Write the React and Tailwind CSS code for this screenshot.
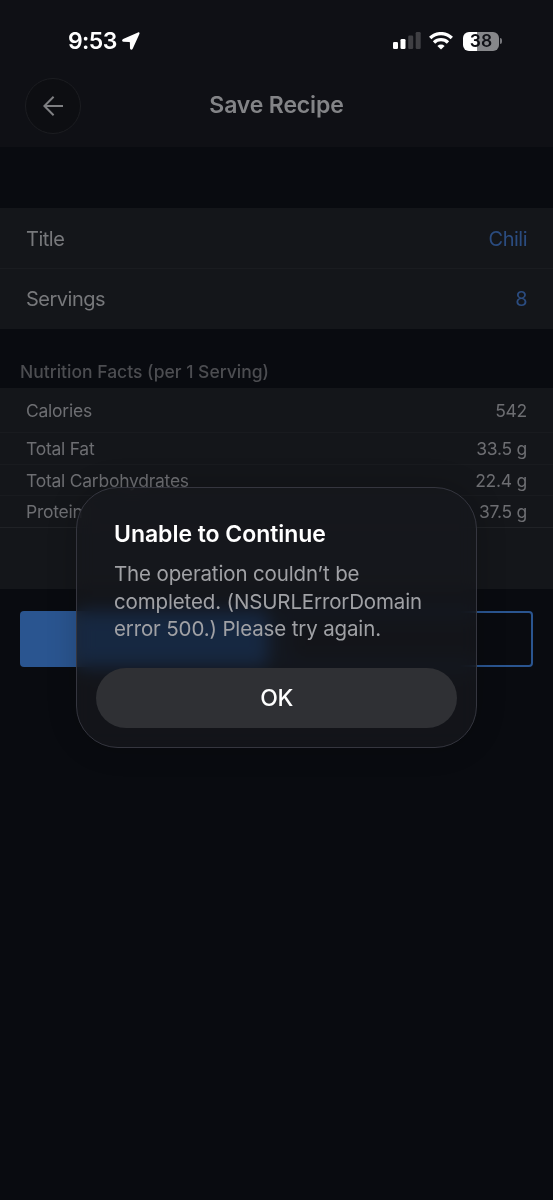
const facts = [
  { label: 'Calories', value: '542', row: 'h-[45px]' },
  { label: 'Total Fat', value: '33.5 g', row: 'h-[32px]' },
  { label: 'Total Carbohydrates', value: '22.4 g', row: 'h-[31px]' },
  { label: 'Protein', value: '37.5 g', row: 'h-[32px]' },
];

function StatusBar() {
  return (
    <div className="flex h-[62px] items-center justify-between pt-5 pr-[51px] pl-[68px] text-white">
      <div className="flex items-center gap-[5px]">
        <span className="text-[23px] leading-6 font-semibold tracking-[-0.6px]">9:53</span>
        <svg width="18" height="18" viewBox="0 0 18 18" fill="currentColor">
          <path d="M16 .5 1.1 7C-.3 7.7-.2 9.6 1.3 9.7l5.9.2c.5 0 .7.2.7.7l.1 5.7c.1 1.7 2 1.9 2.7.4L17.4 2C17.9.9 17-.1 16 .5Z" />
        </svg>
      </div>
      <div className="flex items-center">
        <svg width="28" height="18" viewBox="0 0 28 18" fill="currentColor">
          <rect x="0" y="10" width="5" height="7" rx="1.3" />
          <rect x="7.5" y="7" width="5" height="10" rx="1.3" />
          <rect x="15.2" y="3.5" width="5" height="13.5" rx="1.3" opacity=".2" />
          <rect x="22.7" y="0" width="5" height="17" rx="1.3" opacity=".2" />
        </svg>
        <svg className="mr-px ml-[8px]" width="24" height="18" viewBox="0 0 24 18" fill="none" stroke="currentColor" strokeWidth="3.3">
          <path d="M1.2 6A15.4 15.4 0 0 1 22.8 6" />
          <path d="M5 10.5A10 10 0 0 1 19 10.5" />
          <path d="M8.4 13.9A5.3 5.3 0 0 1 15.6 13.9L12 17.6Z" fill="currentColor" stroke="none" />
        </svg>
        <div className="ml-[9px] flex h-[19px] w-9 items-center justify-center rounded-[6px] bg-linear-to-r from-white from-38% to-[#86878a] to-38% text-[17.5px] font-semibold text-[#0f1015]">
          38
        </div>
        <div className="ml-px h-[6px] w-[2px] rounded-r-full bg-[#76777b]" />
      </div>
    </div>
  );
}

function Header() {
  return (
    <header className="h-[147px] bg-[#0f1015]">
      <StatusBar />
      <div className="grid h-[87px] grid-cols-[56px_1fr_56px] items-center px-[25px]">
        <button className="flex size-[56px] items-center justify-center rounded-full border border-[#1c1d21] bg-[#0d0e12] text-[#7e7f82]" aria-label="Back">
          <svg width="20" height="20" viewBox="0 0 20 20" fill="none" stroke="currentColor" strokeWidth="2">
            <path d="M20 10H1.5M10.6.8 1.4 10l9.2 9.2" />
          </svg>
        </button>
        <h1 className="text-center text-[23px] font-semibold tracking-[-0.15px] text-[#838487]">Save Recipe</h1>
      </div>
    </header>
  );
}

function Alert() {
  return (
    <div role="alertdialog" className="absolute top-[487px] left-[76px] h-[261px] w-[401px] rounded-[42px] border border-[#35363f] bg-[#17181c]/75 px-[19px] pt-[30px] shadow-[0_0_30px_rgba(0,0,0,0.2)] backdrop-blur-[9px] backdrop-saturate-150">
      <div className="pl-[18px]">
        <h2 className="text-[23px] leading-8 font-semibold tracking-[-0.04px] whitespace-nowrap text-white">Unable to Continue</h2>
        <p className="mt-[10px] text-[20.5px] leading-[27.6px] tracking-[-0.14px] whitespace-nowrap text-[#a0a1a5]">
          The operation couldn’t be
          <br />
          completed. (NSURLErrorDomain
          <br />
          error 500.) Please try again.
        </p>
      </div>
      <button className="mt-[25px] h-[60px] w-full rounded-full bg-[#2f3034] text-[23px] font-medium tracking-[-0.5px] text-white">OK</button>
    </div>
  );
}

export default function App() {
  return (
    <div className="relative h-[1200px] w-[553px] overflow-hidden bg-[#090b10] font-['Inter',sans-serif]">
      <Header />
      <section className="mt-[61px] bg-[#14161a] text-[20px] tracking-[-0.5px] text-[#77787b]">
        <div className="flex h-[61px] items-center justify-between border-b border-[#1a1c20] px-[26px] pt-[2px]">
          <span>Title</span>
          <span className="text-[#2b4c80]">Chili</span>
        </div>
        <div className="flex h-[60px] items-center justify-between px-[26px]">
          <span>Servings</span>
          <span className="text-[#2b4c80]">8</span>
        </div>
      </section>
      <h2 className="flex h-[59px] items-end px-[20px] pb-[3px] text-[17.5px] font-medium text-[#4c4d51]">Nutrition Facts (per 1 Serving)</h2>
      <section className="h-[201px] bg-[#14161a] text-[17.5px] tracking-[-0.25px] text-[#6d6e72]">
        {facts.map((fact) => (
          <div key={fact.label} className={`flex items-center justify-between border-b border-[#191b1f] px-[26px] pt-[2px] last:border-[#202226] ${fact.row}`}>
            <span>{fact.label}</span>
            <span>{fact.value}</span>
          </div>
        ))}
      </section>
      <div className="mt-[22px] grid grid-cols-2 gap-[15px] px-[20px]">
        <button className="h-[56px] rounded-[4px] bg-[#2a5590]" aria-label="Save" />
        <button className="h-[56px] rounded-[4px] border-2 border-[#2a5590]" aria-label="Cancel" />
      </div>
      <Alert />
    </div>
  );
}
